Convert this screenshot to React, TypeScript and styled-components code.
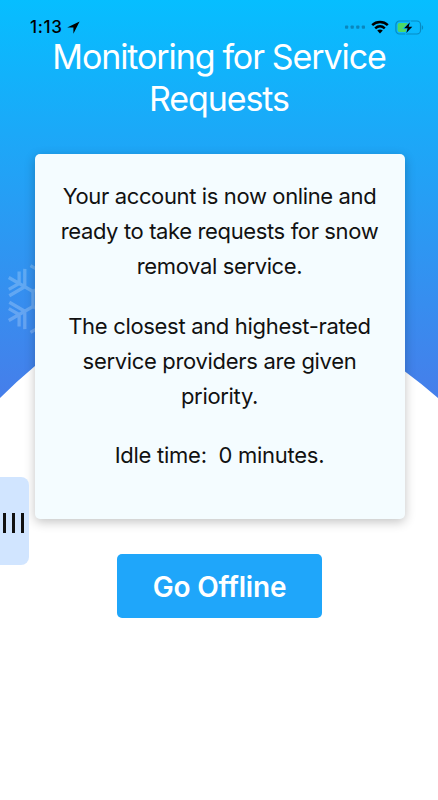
import React from 'react';
import styled, {createGlobalStyle} from 'styled-components';

interface MessageProps {
  spacing: string;
}

function StatusIcons() {
  return (
    <StatusRight>
      <svg width="20" height="4" viewBox="0 0 20 4" fill="#0a86bd">
        <rect x="0" y="0.5" width="3.2" height="3.2" rx="0.8" />
        <rect x="5.6" y="0.5" width="3.2" height="3.2" rx="0.8" />
        <rect x="11.2" y="0.5" width="3.2" height="3.2" rx="0.8" />
        <rect x="16.8" y="0.5" width="3.2" height="3.2" rx="0.8" />
      </svg>
      <WifiIcon width="18" height="14" viewBox="0 0 18 14" fill="none" stroke="#000" strokeWidth="2.5">
        <path d="M1.2 5.1C5.6 0.9 12.4 0.9 16.8 5.1" />
        <path d="M4.2 8.3C7 5.7 11 5.7 13.8 8.3" />
        <path d="M6.2 10.6C7.8 9.1 10.2 9.1 11.8 10.6L9 13.4Z" fill="#000" stroke="none" />
      </WifiIcon>
      <svg width="29" height="15" viewBox="0 0 29 15">
        <rect x="0.9" y="1" width="24.6" height="13" rx="3.6" fill="none" stroke="#078bc3" strokeWidth="1.2" />
        <path d="M26.8 5.2v4.6c1.8-.7 1.8-3.9 0-4.6z" fill="#078bc3" />
        <path d="M4.5 3H13L9.3 8.4H12L10.5 12H4.5Q2.7 12 2.7 10.2V4.8Q2.7 3 4.5 3Z" fill="#4cd964" />
        <path d="M14.9 2.2L9.1 8.2H12.6L11.3 12.9L17.3 6.8H13.7Z" fill="#000" stroke="#09b8fd" strokeWidth="1.5" paintOrder="stroke" />
      </svg>
    </StatusRight>
  );
}

function Snowflake() {
  return (
    <Flake width="90" height="90" viewBox="-45 -45 90 90">
      <path d="M0 -15L13 -7.5V7.5L0 15L-13 7.5V-7.5Z" />
      {[0, 60, 120, 180, 240, 300].map((angle) => (
        <g key={angle} transform={`rotate(${angle})`}>
          <path d="M0 -15V-43M-15.5 -33.4L0 -24.5L15.5 -33.4M-10.3 -37L0 -31L10.3 -37" />
        </g>
      ))}
    </Flake>
  );
}

function App() {
  return (
    <Screen>
      <GlobalStyle />
      <Backdrop width="438" height="400" viewBox="0 0 438 400">
        <defs>
          <linearGradient id="sky" x1="0" y1="0" x2="0" y2="1">
            <stop offset="0" stopColor="#06beff" />
            <stop offset="1" stopColor="#467eea" />
          </linearGradient>
        </defs>
        <path d="M0 0H438V398Q422 384 405 371.5Q219 240 35 366Q17 381 0 398Z" fill="url(#sky)" />
      </Backdrop>
      <Snowflake />

      <StatusBar>
        <Clock>1:13</Clock>
        <svg width="13" height="13" viewBox="0 0 13 13">
          <path d="M12.6 0.4L0.2 6.4H6.4V12.8Z" fill="#000" />
        </svg>
        <StatusIcons />
      </StatusBar>

      <Title>Monitoring for Service Requests</Title>

      <Card>
        <Message spacing="-0.37px">
          Your account is now online and ready to take requests for snow removal service.
        </Message>
        <Message spacing="-0.32px">
          The closest and highest-rated service providers are given priority.
        </Message>
        <Message spacing="-0.27px">Idle time: &nbsp;0 minutes.</Message>
      </Card>

      <OfflineButton>Go Offline</OfflineButton>

      <DrawerHandle aria-label="Open menu">
        <Grip />
        <Grip />
        <Grip />
      </DrawerHandle>
    </Screen>
  );
}

const GlobalStyle = createGlobalStyle`
  body {
    margin: 0;
    background: #fff;
  }
`;

const Screen = styled.div`
  position: relative;
  display: flex;
  flex-direction: column;
  align-items: center;
  width: 438px;
  height: 800px;
  overflow: hidden;
  background: #fff;
  font-family: Inter, "Liberation Sans", sans-serif;
`;

const Backdrop = styled.svg`
  position: absolute;
  top: 0;
  left: 0;
`;

const Flake = styled.svg`
  position: absolute;
  top: 254px;
  left: 1px;
  fill: none;
  stroke: #fff;
  stroke-width: 3.3;
  opacity: 0.22;
`;

const StatusBar = styled.div`
  position: relative;
  display: flex;
  align-items: center;
  gap: 4px;
  box-sizing: border-box;
  width: 100%;
  height: 36px;
  padding: 18px 14px 0 30px;
`;

const Clock = styled.span`
  font-size: 17px;
  font-weight: 500;
  line-height: 18px;
  letter-spacing: 0.7px;
`;

const StatusRight = styled.div`
  display: flex;
  align-items: center;
  gap: 6px;
  margin-left: auto;
`;

const WifiIcon = styled.svg`
  margin-top: -1px;
`;

const Title = styled.h1`
  position: relative;
  width: 380px;
  margin: 0;
  color: #fff;
  font-size: 34px;
  font-weight: 400;
  letter-spacing: -1.1px;
  word-spacing: -0.5px;
  line-height: 42px;
  text-align: center;
`;

const Card = styled.div`
  position: relative;
  display: flex;
  flex-direction: column;
  gap: 24px;
  box-sizing: border-box;
  width: 370px;
  height: 365px;
  margin: 34px 0 0 2px;
  padding: 25px 21px 25px 20px;
  border-radius: 5px;
  background: #f4fcff;
  box-shadow: 0 3px 11px rgba(0, 0, 0, 0.24);
`;

const Message = styled.p<MessageProps>`
  margin: 0;
  color: #111;
  font-size: 22px;
  letter-spacing: ${(props) => props.spacing};
  line-height: 35.2px;
  text-align: center;
`;

const OfflineButton = styled.button`
  width: 205px;
  height: 64px;
  margin: 35px 0 0 1px;
  padding: 1px 0 0;
  border: none;
  border-radius: 5px;
  background: #1fa6fa;
  color: #fff;
  font-family: inherit;
  font-size: 28px;
  font-weight: 600;
  letter-spacing: -0.2px;
`;

const DrawerHandle = styled.div`
  position: absolute;
  top: 477px;
  left: 0;
  display: flex;
  align-items: center;
  gap: 6px;
  box-sizing: border-box;
  width: 29px;
  height: 88px;
  padding: 4px 0 0 3px;
  border-radius: 0 8px 8px 0;
  background: #d1e5ff;
`;

const Grip = styled.span`
  width: 3px;
  height: 20px;
  background: #111;
`;

export default App;
